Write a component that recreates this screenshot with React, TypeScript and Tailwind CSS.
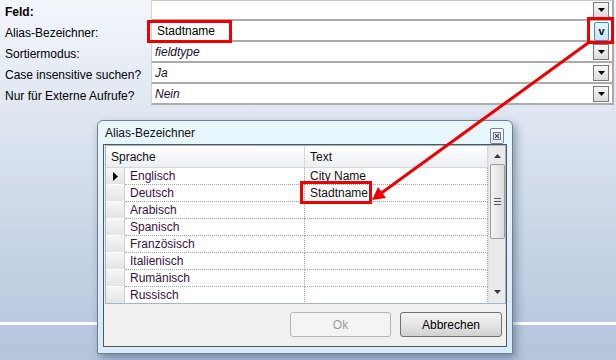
import React from 'react';

type PropRow = { label: string; value: string; bold?: boolean; editing?: boolean; hot?: boolean };

const propRows: PropRow[] = [
  { label: 'Feld:', value: '', bold: true },
  { label: 'Alias-Bezeichner:', value: 'Stadtname', editing: true, hot: true },
  { label: 'Sortiermodus:', value: 'fieldtype' },
  { label: 'Case insensitive suchen?', value: 'Ja' },
  { label: 'Nur für Externe Aufrufe?', value: 'Nein' },
];

const languages: [string, string][] = [
  ['Englisch', 'City Name'],
  ['Deutsch', 'Stadtname'],
  ['Arabisch', ''],
  ['Spanisch', ''],
  ['Französisch', ''],
  ['Italienisch', ''],
  ['Rumänisch', ''],
  ['Russisch', ''],
];

const DropButton: React.FC<{ hot?: boolean }> = ({ hot }) =>
  hot ? (
    <div className="w-[15px] h-[19px] mt-[1px] rounded-[2px] border border-[#3c8fd0] bg-gradient-to-b from-[#eaf6fd] to-[#c6e4f8] flex items-center justify-center text-[11px] font-bold leading-none text-[#111]">
      v
    </div>
  ) : (
    <div className="w-[16px] h-[16px] border border-[#7a7a7a] bg-gradient-to-b from-[#f7f7f7] to-[#dcdcdc] flex items-center justify-center">
      <svg width="7" height="4" viewBox="0 0 7 4">
        <polygon points="0,0 7,0 3.5,4" fill="#000" />
      </svg>
    </div>
  );

const App: React.FC = () => {
  return (
    <div className="relative w-[616px] h-[360px] overflow-hidden bg-gradient-to-b from-[#f3f6fb] to-[#b3c4db] font-['Liberation_Sans',Arial,sans-serif] text-[12px] text-black">
      {/* property grid */}
      <div className="w-[614px] flex flex-col">
        {propRows.map((row, i) => (
          <div key={row.label} className="h-[21px] flex">
            <div className={`w-[151px] pl-[5px] pt-[3px] flex items-center ${row.bold ? 'font-bold' : ''}`}>
              {row.label}
            </div>
            <div
              className={`flex-1 flex items-center bg-white border-b-2 border-r-2 border-[#ababab] border-l border-l-[#d4d4d4] pr-[3px] ${
                i === 0 ? 'border-t border-t-[#c8c8c8]' : ''
              }`}
            >
              <div
                className={`flex-1 pt-[1px] ${row.editing ? 'pl-[5px] text-black' : 'pl-[3px] italic text-[#1c0f2e]'}`}
              >
                {row.value}
              </div>
              <DropButton hot={row.hot} />
            </div>
          </div>
        ))}
      </div>

      <div className="h-[217px]" />
      <div className="h-[3px] bg-white" />

      {/* dialog window */}
      <div className="absolute left-[97px] top-[120px] w-[416px] h-[234px] rounded-t-[6px] border border-[#6f7e8e] bg-gradient-to-b from-[#e9f7fd] to-[#d6ebf7] px-[5px] pb-[6px] flex flex-col shadow-[3px_4px_8px_rgba(40,60,90,0.45)]">
        <div className="h-[23px] flex items-center justify-between pl-[2px] pr-[3px]">
          <span className="text-[#101010]">Alias-Bezeichner</span>
          <div className="w-[14px] h-[16px] mt-[6px] rounded-[2px] border border-[#7b8794] bg-gradient-to-b from-[#fbfdff] to-[#e0ebf2] flex items-center justify-center">
            <svg width="8" height="8" viewBox="0 0 8 8">
              <rect x="0.5" y="0.5" width="7" height="7" fill="none" stroke="#6a7682" />
              <path d="M2 2 L6 6 M6 2 L2 6" stroke="#4a5560" strokeWidth="1.3" />
            </svg>
          </div>
        </div>

        <div className="flex-1 border border-[#4d5864] bg-[#f0f0f0] flex flex-col">
          {/* data grid */}
          <div className="h-[159px] ml-[1px] border border-[#a8b4c2] bg-white flex overflow-hidden">
            <div className="flex-1 flex flex-col">
              <div className="h-[22px] shrink-0 flex bg-gradient-to-b from-[#ffffff] to-[#eceef1] border-b border-[#d5d8dc]">
                <div className="w-[199px] pl-[5px] flex items-center border-r border-[#d5d8dc] text-[#111]">Sprache</div>
                <div className="flex-1 pl-[5px] flex items-center border-r border-[#d5d8dc] text-[#111]">Text</div>
              </div>
              {languages.map(([lang, text], i) => (
                <div key={lang} className="h-[17px] shrink-0 flex">
                  <div className="w-[19px] flex items-center justify-center bg-gradient-to-b from-[#f6f6f6] to-[#e4e4e4] border-r border-[#cfcfcf] border-b border-b-[#ffffff]">
                    {i === 0 && (
                      <svg width="5" height="9" viewBox="0 0 5 9">
                        <polygon points="0,0 5,4.5 0,9" fill="#000" />
                      </svg>
                    )}
                  </div>
                  <div className="w-[180px] pl-[5px] flex items-center border-r border-b border-dotted border-[#a6a6a6] text-[#3a0f3e]">
                    {lang}
                  </div>
                  <div className="flex-1 pl-[5px] flex items-center border-r border-b border-dotted border-[#a6a6a6] text-[#111]">
                    {text}
                  </div>
                </div>
              ))}
            </div>
            {/* scrollbar */}
            <div className="w-[17px] bg-[#eaeaea] border-l border-[#e2e2e2] flex flex-col items-center">
              <div className="h-[17px] w-full flex items-center justify-center pt-[2px]">
                <svg width="7" height="4" viewBox="0 0 7 4">
                  <polygon points="0,4 7,4 3.5,0" fill="#3a3a3a" />
                </svg>
              </div>
              <div className="mt-[1px] h-[75px] w-[15px] rounded-[2px] border border-[#9d9d9d] bg-gradient-to-r from-[#f4f4f4] to-[#dcdcdc] flex flex-col items-center justify-center gap-[2px]">
                <div className="w-[7px] h-px bg-[#5a5a5a]" />
                <div className="w-[7px] h-px bg-[#5a5a5a]" />
                <div className="w-[7px] h-px bg-[#5a5a5a]" />
              </div>
              <div className="flex-1" />
              <div className="h-[17px] w-full flex items-center justify-center pb-[6px]">
                <svg width="7" height="4" viewBox="0 0 7 4">
                  <polygon points="0,0 7,0 3.5,4" fill="#3a3a3a" />
                </svg>
              </div>
            </div>
          </div>

          {/* buttons */}
          <div className="flex justify-end gap-[9px] pr-[4px] pt-[8px]">
            <div className="w-[101px] h-[25px] rounded-[3px] border border-[#b5b5b5] bg-[#f4f4f4] flex items-center justify-center text-[#9a9a9a]">
              Ok
            </div>
            <div className="w-[102px] h-[25px] rounded-[3px] border border-[#707070] bg-gradient-to-b from-[#f3f3f3] via-[#e6e6e6] to-[#d0d0d0] flex items-center justify-center text-black">
              Abbrechen
            </div>
          </div>
        </div>
      </div>

      {/* annotations */}
      <div className="absolute left-[147px] top-[20px] w-[85px] h-[23px] border-[3px] border-[#f00000]" />
      <div className="absolute left-[587px] top-[17px] w-[27px] h-[27px] border-[3px] border-[#f00000]" />
      <div className="absolute left-[300px] top-[181px] w-[72px] h-[23px] border-[3px] border-[#f00000]" />
      <svg className="absolute left-0 top-0" width="616" height="360" viewBox="0 0 616 360">
        <line x1="588" y1="43" x2="380" y2="194" stroke="#f00000" strokeWidth="3" />
        <polygon points="372,200 386,198 378,187" fill="#f00000" />
      </svg>
    </div>
  );
};

export default App;
